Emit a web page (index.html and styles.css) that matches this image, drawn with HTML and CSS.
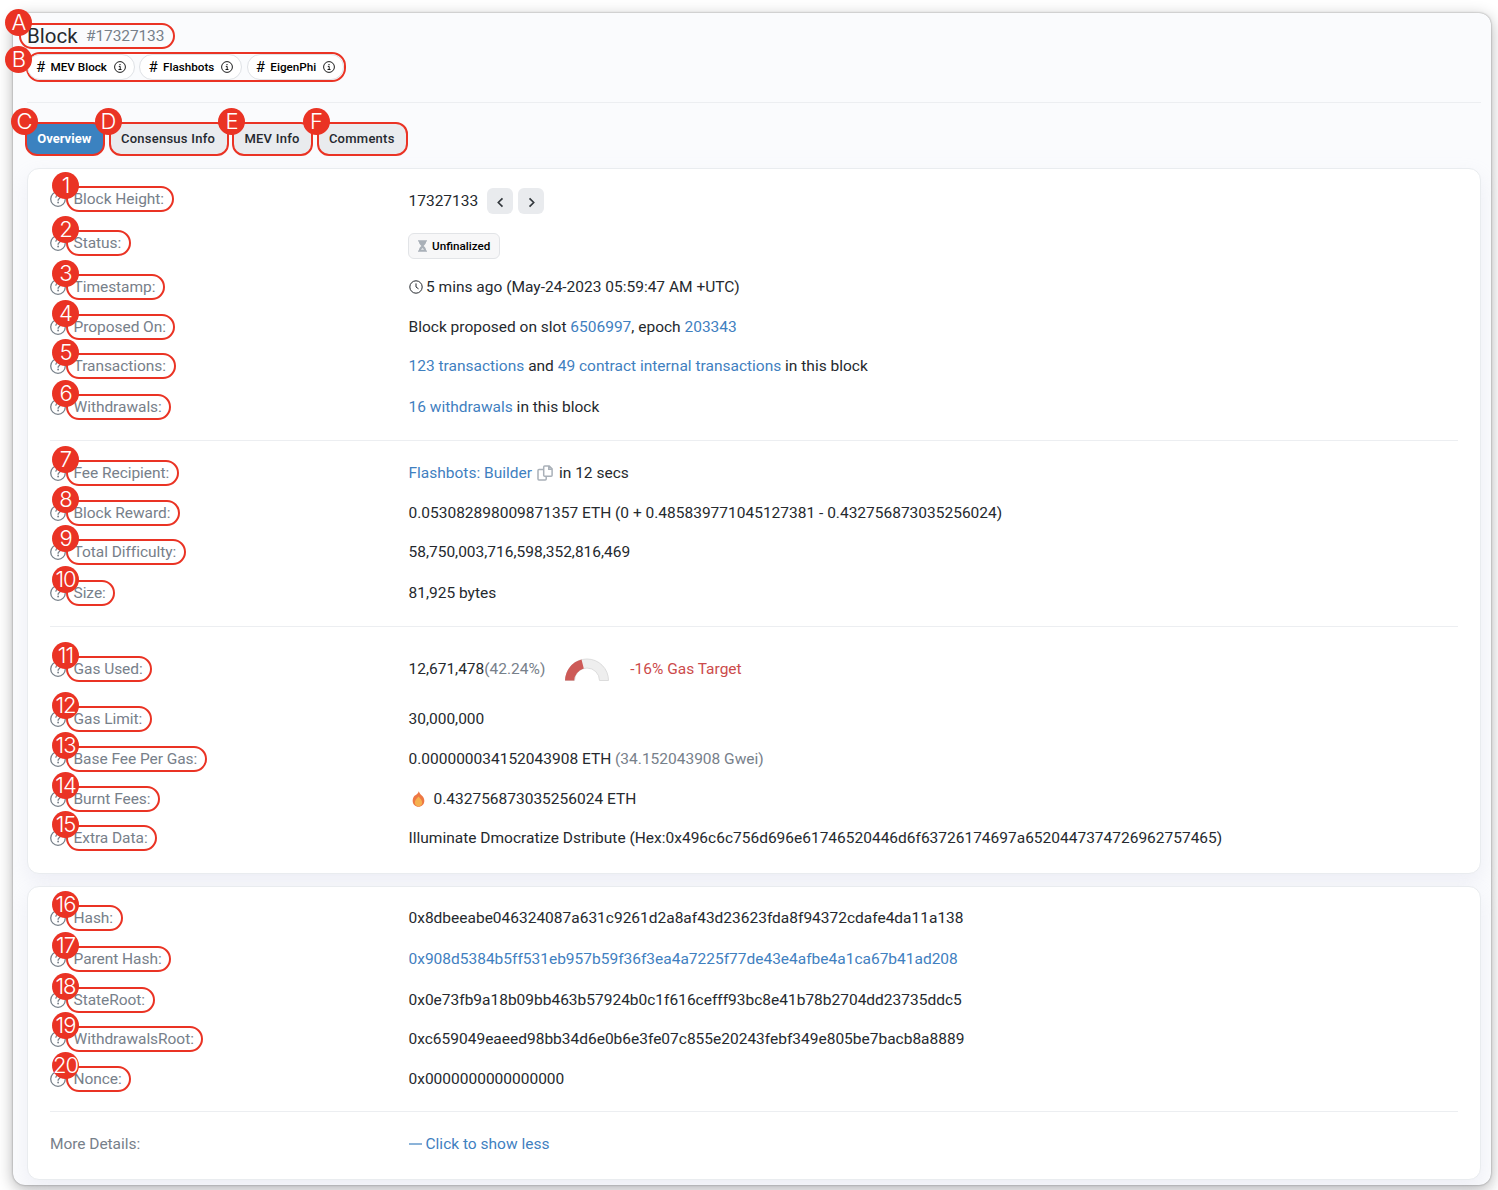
FILE: index.html
```html
<!DOCTYPE html>
<html lang="en">
<head>
  <meta charset="UTF-8">
  <meta name="viewport" content="width=device-width, initial-scale=1.0">
  <title>Block #17327133</title>
  <link rel="stylesheet" href="styles.css">
</head>
<body>
  <!-- Shared icons -->
  <svg class="sprite" width="0" height="0">
    <symbol id="help" viewBox="0 0 16 16">
      <circle cx="8" cy="8" r="7.3" fill="none" stroke="currentColor" stroke-width="1.3"/>
      <path d="M5.9 6.2C6 5 6.8 4.4 8 4.4s2.1.7 2.1 1.8c0 1.5-2 1.6-2 3.1" fill="none" stroke="currentColor" stroke-width="1.3" stroke-linecap="round"/>
      <circle cx="8.1" cy="11.5" r=".9" fill="currentColor"/>
    </symbol>
    <symbol id="info" viewBox="0 0 12 12">
      <circle cx="6" cy="6" r="5.4" fill="none" stroke="currentColor" stroke-width=".9"/>
      <path d="M4.8 5.4h1.4v3M4.5 8.5h3" fill="none" stroke="currentColor" stroke-width=".9"/>
      <circle cx="6" cy="3.6" r=".7" fill="currentColor"/>
    </symbol>
  </svg>

  <div class="window">
    <div class="header">
      <div class="mark title"><b class="badge">A</b><h1>Block</h1><span class="number">#17327133</span></div>
      <div class="mark tags">
        <b class="badge">B</b>
        <span class="tag"><i>#</i> <span>MEV Block</span> <svg><use href="#info"/></svg></span>
        <span class="tag"><i>#</i> <span>Flashbots</span> <svg><use href="#info"/></svg></span>
        <span class="tag"><i>#</i> <span>EigenPhi</span> <svg><use href="#info"/></svg></span>
      </div>
    </div>

    <div class="tabs">
      <div class="mark tab active"><b class="badge">C</b><span>Overview</span></div>
      <div class="mark tab consensus"><b class="badge">D</b><span>Consensus Info</span></div>
      <div class="mark tab mev"><b class="badge">E</b><span>MEV Info</span></div>
      <div class="mark tab comments"><b class="badge">F</b><span>Comments</span></div>
    </div>

    <div class="card">
      <div class="row height">
        <div class="label"><svg><use href="#help"/></svg><div class="mark"><b class="badge">1</b><span>Block Height:</span></div></div>
        <div class="value"><span>17327133</span>
          <button class="nav"><svg viewBox="0 0 10 10"><path d="M6.8 1.2 3 5l3.8 3.8"/></svg></button>
          <button class="nav"><svg viewBox="0 0 10 10"><path d="M3.2 1.2 7 5 3.2 8.8"/></svg></button>
        </div>
      </div>
      <div class="row status">
        <div class="label"><svg><use href="#help"/></svg><div class="mark"><b class="badge">2</b><span>Status:</span></div></div>
        <div class="value"><div class="pending"><svg viewBox="0 0 10 13"><path d="M0 0h10v1.6H9C9 4 7.6 5.3 6.2 6.5 7.6 7.7 9 9 9 11.4h1V13H0v-1.6h1C1 9 2.4 7.7 3.8 6.5 2.4 5.3 1 4 1 1.6H0z" fill="#a9b0b8"/><path d="M3.2 10.8h3.6L5 8.6z" fill="#e9ebee"/></svg><span>Unfinalized</span></div></div>
      </div>
      <div class="row">
        <div class="label"><svg><use href="#help"/></svg><div class="mark"><b class="badge">3</b><span>Timestamp:</span></div></div>
        <div class="value"><svg class="clock" viewBox="0 0 14 14"><circle cx="7" cy="7" r="6.2"/><path d="M7 3.4V7l2.5 1.8"/></svg><span>5 mins ago (May-24-2023 05:59:47 AM +UTC)</span></div>
      </div>
      <div class="row">
        <div class="label"><svg><use href="#help"/></svg><div class="mark"><b class="badge">4</b><span>Proposed On:</span></div></div>
        <div class="value"><span>Block proposed on slot <a>6506997</a>, epoch <a>203343</a></span></div>
      </div>
      <div class="row">
        <div class="label"><svg><use href="#help"/></svg><div class="mark"><b class="badge">5</b><span>Transactions:</span></div></div>
        <div class="value"><span><a>123 transactions</a> and <a>49 contract internal transactions</a> in this block</span></div>
      </div>
      <div class="row last">
        <div class="label"><svg><use href="#help"/></svg><div class="mark"><b class="badge">6</b><span>Withdrawals:</span></div></div>
        <div class="value"><span><a>16 withdrawals</a> in this block</span></div>
      </div>
      <hr>
      <div class="row">
        <div class="label"><svg><use href="#help"/></svg><div class="mark"><b class="badge">7</b><span>Fee Recipient:</span></div></div>
        <div class="value"><span><a>Flashbots: Builder</a></span><svg class="copy" viewBox="0 0 16 16"><path d="M7.7.9h4.5l2.9 2.9v6.4q0 1-1 1H7.7q-1 0-1-1V1.9q0-1 1-1zM11.8 1v3.2H15M6.5 4.4H2q-1 0-1 1v8.5q0 1 1 1h6.2q1 0 1-1v-2.5"/></svg><span>in 12 secs</span></div>
      </div>
      <div class="row">
        <div class="label"><svg><use href="#help"/></svg><div class="mark"><b class="badge">8</b><span>Block Reward:</span></div></div>
        <div class="value"><span>0.053082898009871357 ETH (0 + 0.485839771045127381 - 0.432756873035256024)</span></div>
      </div>
      <div class="row">
        <div class="label"><svg><use href="#help"/></svg><div class="mark"><b class="badge">9</b><span>Total Difficulty:</span></div></div>
        <div class="value"><span>58,750,003,716,598,352,816,469</span></div>
      </div>
      <div class="row last">
        <div class="label"><svg><use href="#help"/></svg><div class="mark"><b class="badge">10</b><span>Size:</span></div></div>
        <div class="value"><span>81,925 bytes</span></div>
      </div>
      <hr>
      <div class="row gas">
        <div class="label"><svg><use href="#help"/></svg><div class="mark"><b class="badge">11</b><span>Gas Used:</span></div></div>
        <div class="value"><span>12,671,478</span><span class="muted">(42.24%)</span>
          <svg class="gauge" viewBox="0 0 44 23"><path d="M.5 22.5a21.500 21.500 0 0 1 43 0H34.500a12.500 12.500 0 0 0-25 0z" fill="#eee" stroke="#dcdcdc"/><path d="M0 22.500A22 22 0 0 1 16.500 1.600L18.800 10.500A13 13 0 0 0 9.200 22.500z" fill="#cd5a57"/></svg>
          <span class="target">-16% Gas Target</span></div>
      </div>
      <div class="row">
        <div class="label"><svg><use href="#help"/></svg><div class="mark"><b class="badge">12</b><span>Gas Limit:</span></div></div>
        <div class="value"><span>30,000,000</span></div>
      </div>
      <div class="row">
        <div class="label"><svg><use href="#help"/></svg><div class="mark"><b class="badge">13</b><span>Base Fee Per Gas:</span></div></div>
        <div class="value"><span>0.000000034152043908 ETH <em>(34.152043908 Gwei)</em></span></div>
      </div>
      <div class="row">
        <div class="label"><svg><use href="#help"/></svg><div class="mark"><b class="badge">14</b><span>Burnt Fees:</span></div></div>
        <div class="value"><svg class="flame" viewBox="0 0 13 17"><path d="M6.8.2c.6 2.2 2.100 3.200 3.200 4.600 1.500 1.500 2.700 3.200 2.700 5.600 0 3.700-2.700 6.400-6.200 6.400S.3 14.100.3 10.400c0-2.100.8-3.900 2-5.400C4 3.800 6.300 2.600 6.800.2z" fill="#ee7844"/><path d="M6.500 5.800c2 2.200 3.900 4.100 3.900 6.600 0 2.200-1.700 3.700-3.900 3.700s-3.900-1.500-3.900-3.700c0-2.500 1.900-4.400 3.900-6.600z" fill="#f5b04f"/></svg><span>0.432756873035256024 ETH</span></div>
      </div>
      <div class="row">
        <div class="label"><svg><use href="#help"/></svg><div class="mark"><b class="badge">15</b><span>Extra Data:</span></div></div>
        <div class="value"><span>Illuminate Dmocratize Dstribute (Hex:0x496c6c756d696e61746520446d6f63726174697a6520447374726962757465)</span></div>
      </div>
    </div>

    <div class="card second">
      <div class="row">
        <div class="label"><svg><use href="#help"/></svg><div class="mark"><b class="badge">16</b><span>Hash:</span></div></div>
        <div class="value"><span>0x8dbeeabe046324087a631c9261d2a8af43d23623fda8f94372cdafe4da11a138</span></div>
      </div>
      <div class="row parent">
        <div class="label"><svg><use href="#help"/></svg><div class="mark"><b class="badge">17</b><span>Parent Hash:</span></div></div>
        <div class="value"><span><a>0x908d5384b5ff531eb957b59f36f3ea4a7225f77de43e4afbe4a1ca67b41ad208</a></span></div>
      </div>
      <div class="row">
        <div class="label"><svg><use href="#help"/></svg><div class="mark"><b class="badge">18</b><span>StateRoot:</span></div></div>
        <div class="value"><span>0x0e73fb9a18b09bb463b57924b0c1f616cefff93bc8e41b78b2704dd23735ddc5</span></div>
      </div>
      <div class="row">
        <div class="label"><svg><use href="#help"/></svg><div class="mark"><b class="badge">19</b><span>WithdrawalsRoot:</span></div></div>
        <div class="value"><span>0xc659049eaeed98bb34d6e0b6e3fe07c855e20243febf349e805be7bacb8a8889</span></div>
      </div>
      <div class="row">
        <div class="label"><svg><use href="#help"/></svg><div class="mark"><b class="badge">20</b><span>Nonce:</span></div></div>
        <div class="value"><span>0x0000000000000000</span></div>
      </div>
      <hr>
      <div class="row more">
        <div class="label"><span>More Details:</span></div>
        <div class="value"><svg class="minus" viewBox="0 0 14 2"><path d="M0 1h13"/></svg><span><a>Click to show less</a></span></div>
      </div>
    </div>
  </div>
</body>
</html>
```
FILE: styles.css
```css
* {
  box-sizing: border-box;
}

body {
  margin: 0;
  padding: 13px 7px 5px 13px;
  height: 1190px;
  overflow: hidden;
  background: #fff;
  color: #25292e;
  font-family: Roboto, sans-serif;
  font-size: 15.5px;
}

.sprite {
  position: absolute;
}

.window {
  height: 1172px;
  padding: 0 10px 0 14px;
  border-radius: 12px;
  background: #fafbfd;
  box-shadow: 0 0 2px rgba(0, 0, 0, 0.4), 0 4px 16px rgba(0, 0, 0, 0.3);
}

/* Red outline with a numbered badge on its corner */
.mark {
  position: relative;
  display: flex;
  align-items: center;
  height: 26px;
  border: 2px solid #ea3324;
  border-radius: 13px;
}

.badge {
  position: absolute;
  left: -16px;
  top: -16px;
  width: 27px;
  height: 27px;
  border-radius: 50%;
  background: #ea3324;
  color: #fff;
  font-family: Inter, sans-serif;
  font-size: 22px;
  font-weight: 300;
  line-height: 27px;
  text-align: center;
  letter-spacing: -1px;
  z-index: 2;
}

.header {
  height: 90px;
  padding-top: 10px;
  border-bottom: 1px solid #eceef1;
}

.title {
  width: 156px;
  margin-left: -8px;
  padding-left: 6px;
}

.title h1 {
  width: 50px;
  margin: 0 9px 0 0;
  font-size: 20.5px;
  font-weight: 400;
}

.number {
  color: #77808a;
  letter-spacing: -0.1px;
}

.tags {
  width: 320px;
  height: 30px;
  margin: 3px 0 0 -1px;
  gap: 4.5px;
  border-radius: 14px;
}

.tags .badge {
  left: -23px;
  top: -8px;
}

.tag {
  display: flex;
  flex: none;
  align-items: center;
  gap: 4px;
  height: 26px;
  padding: 0 8px;
  border: 1px solid #dfe2e6;
  border-radius: 13px;
  background: #fff;
  color: #000;
  font-size: 11.7px;
  font-weight: 500;
  white-space: nowrap;
}

.tag:nth-of-type(1) {
  margin-left: -1px;
}

.tag i {
  width: 10.5px;
  font-size: 15px;
  font-style: normal;
  font-weight: 400;
}

.tag span {
  margin-top: -1px;
}

.tag svg {
  width: 12px;
  height: 12px;
  margin-left: 3px;
}

.tabs {
  display: flex;
  gap: 3.5px;
  height: 64.5px;
  margin-left: -2.5px;
  padding-top: 19px;
}

.tab {
  width: 80.5px;
  height: 34px;
  justify-content: center;
  border-radius: 12px;
  background: #e9ebee;
  font-size: 13px;
  font-weight: 500;
  letter-spacing: 0.25px;
}

.tab.active {
  background: #3b82c0;
  color: #fff;
  font-weight: 700;
  letter-spacing: 0;
}

.tab span {
  margin: -1px 1px 0 0;
}

.tab.consensus {
  width: 120px;
}

.tab.mev {
  width: 81px;
}

.tab.comments {
  width: 91.5px;
}

.card {
  height: 706px;
  padding: 11px 22px 0;
  border: 1px solid #e9ecef;
  border-radius: 12px;
  background: #fff;
  box-shadow: 0 8px 19px rgba(189, 190, 215, 0.2);
}

.card.second {
  height: 294px;
  margin-top: 12.5px;
  padding-top: 11.5px;
}

.row {
  display: flex;
  align-items: center;
  height: 39.7px;
}

.label {
  display: flex;
  align-items: center;
  width: 358.5px;
  color: #77808a;
  letter-spacing: -0.05px;
}

.label svg {
  width: 16px;
  height: 16px;
}

.label .mark {
  padding: 0 7.5px 0 5.5px;
}

.value {
  display: flex;
  align-items: center;
}

a {
  color: #3f80bf;
}

em {
  font-style: normal;
}

em,
.muted {
  color: #77808a;
}

hr {
  height: 1px;
  margin: 12.5px 0 12px;
  border: 0;
  background: #eceef1;
}

.row.height .value {
  padding-top: 4px;
}

.nav {
  width: 26px;
  height: 26px;
  margin-left: 9px;
  padding: 0;
  border: 0;
  border-radius: 6px;
  background: #e9ebee;
}

.nav + .nav {
  margin-left: 5px;
}

.nav svg {
  display: block;
  width: 11px;
  height: 11px;
  margin: 3px auto 0;
  fill: none;
  stroke: #33383d;
  stroke-width: 1.5;
}

.row.status {
  height: 48px;
}

.row.status .value {
  padding-top: 6px;
}

.pending {
  display: flex;
  align-items: center;
  gap: 5px;
  width: 92px;
  height: 26px;
  margin-left: -0.5px;
  padding-left: 9px;
  border: 1px solid #e2e4e7;
  border-radius: 6px;
  background: #f7f7f8;
  color: #000;
  font-size: 11.7px;
  font-weight: 500;
}

.pending svg {
  width: 9px;
  height: 12px;
}

.clock {
  width: 14px;
  height: 14px;
  margin-right: 3.5px;
  fill: none;
  stroke: #25292e;
}

.row.last {
  height: 41.5px;
}

.copy {
  width: 16px;
  height: 16px;
  margin: 0 5.5px;
  fill: none;
  stroke: #a9b0b8;
  stroke-width: 1.5;
}

.row.gas {
  height: 60px;
}

.gauge {
  width: 44px;
  height: 23px;
  margin: 0 21px 0 20px;
}

.target {
  color: #cc4b4b;
}

.flame {
  width: 13px;
  height: 16px;
  margin: 0 8.5px 0 3.5px;
}

.row.parent {
  height: 41.5px;
}

.minus {
  width: 14px;
  height: 2px;
  margin-right: 3px;
  stroke: #3f80bf;
  stroke-width: 1.2;
}
```
